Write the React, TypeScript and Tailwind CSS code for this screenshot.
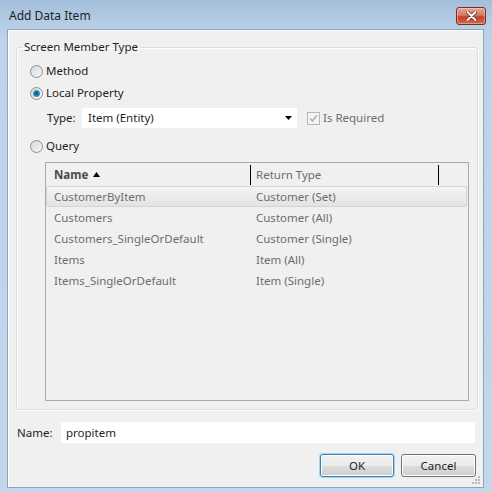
import { useState } from 'react';

const ROWS = [
  { name: 'CustomerByItem', type: 'Customer (Set)' },
  { name: 'Customers', type: 'Customer (All)' },
  { name: 'Customers_SingleOrDefault', type: 'Customer (Single)' },
  { name: 'Items', type: 'Item (All)' },
  { name: 'Items_SingleOrDefault', type: 'Item (Single)' },
];

type Member = 'method' | 'local' | 'query';

export default function App() {
  const [member, setMember] = useState<Member>('local');
  const [selected, setSelected] = useState(0);
  const [name, setName] = useState('propitem');

  return (
    <div className="flex h-[492px] w-[492px] flex-col overflow-hidden bg-[linear-gradient(180deg,#a3bedb_0px,#b3cbe4_20px,#bed3ea_40px,#c2d6ec_100%)] font-['Noto_Sans',sans-serif] text-[11.5px] text-[#1e1e1e]">
      <TitleBar />

      <div className="flex min-h-0 flex-1 pl-[7px] pr-[8px] pb-[4px]">
        {/* client area */}
        <div className="relative flex flex-1 flex-col border border-[#8fa3ba] bg-[#f0f0f0] shadow-[inset_1px_1px_0_#ffffff]">
          <fieldset className="mx-[8px] mt-[9px] mr-[5px] rounded-[3px] border border-[#d5dfe5] shadow-[inset_1px_1px_0_#ffffff,1px_1px_0_#ffffff]">
            <legend className="ml-[5px] px-[2px] leading-[16px]">Screen Member Type</legend>

            <div className="flex flex-col pt-[5px] pb-[8px] pl-[13px] pr-[8px]">
              <Radio label="Method" checked={member === 'method'} onClick={() => setMember('method')} />
              <Radio
                label="Local Property"
                checked={member === 'local'}
                onClick={() => setMember('local')}
              />

              <div className="mt-[4px] flex h-[20px] items-center">
                <span className="ml-[17px] w-[35px]">Type:</span>
                <div className="flex h-[20px] w-[215px] items-center justify-between bg-white pl-[6px] pr-[3px]">
                  <span>Item (Entity)</span>
                  <svg width="8" height="5" viewBox="0 0 8 5" className="mr-[1px]">
                    <path d="M0 0 H7 L3.5 4 Z" fill="#000" />
                  </svg>
                </div>
                <div className="ml-[10px] flex items-center gap-[3px] text-[#6d6d6d]">
                  <span className="flex h-[13px] w-[13px] items-center justify-center border border-[#b7b7b7] bg-[#f4f4f4]">
                    <svg width="9" height="9" viewBox="0 0 9 9">
                      <path d="M1 4.5 L3.5 7 L8 1" fill="none" stroke="#a8b4c0" strokeWidth="1.6" />
                    </svg>
                  </span>
                  <span>Is Required</span>
                </div>
              </div>

              <div className="mt-[7px]">
                <Radio label="Query" checked={member === 'query'} onClick={() => setMember('query')} />
              </div>

              {/* grid */}
              <div className="mt-[5px] ml-[15px] flex h-[239px] flex-col border border-[#a9a9a9] text-[#6d6d6d]">
                <div className="flex h-[23px] items-center">
                  <div className="flex w-[204px] items-center gap-[5px] pl-[8px] font-bold text-[#4a4a4a]">
                    Name
                    <svg width="7" height="5" viewBox="0 0 7 5">
                      <path d="M0 5 H7 L3.5 0 Z" fill="#000" />
                    </svg>
                  </div>
                  <div className="h-[20px] w-px bg-black" />
                  <div className="w-[187px] pl-[5px]">Return Type</div>
                  <div className="h-[20px] w-px bg-black" />
                </div>

                {ROWS.map((r, i) => (
                  <div
                    key={r.name}
                    onClick={() => setSelected(i)}
                    className={
                      i === selected
                        ? 'mr-[1px] flex h-[21px] items-center rounded-[2px] border border-[#d4d4d4] bg-[linear-gradient(180deg,#f4f4f4,#e3e3e3)]'
                        : 'mr-[1px] flex h-[21px] items-center border border-transparent'
                    }
                  >
                    <div className="w-[204px] pl-[7px]">{r.name}</div>
                    <div className="pl-[5px]">{r.type}</div>
                  </div>
                ))}
              </div>
            </div>
          </fieldset>

          <div className="mt-[12px] flex h-[21px] items-center pl-[9px] pr-[8px]">
            <span className="w-[44px]">Name:</span>
            <input
              value={name}
              onChange={(e) => setName(e.target.value)}
              className="h-[21px] flex-1 bg-white pl-[5px] text-[11.5px] text-[#1e1e1e] outline-none"
            />
          </div>

          <div className="mt-[11px] flex justify-end gap-[7px] pr-[7px]">
            <button className="h-[23px] w-[74px] rounded-[3px] border border-[#3c7fb1] bg-[linear-gradient(180deg,#f2f2f2_0%,#ebebeb_50%,#dddddd_51%,#cfcfcf_100%)] shadow-[inset_0_0_0_1px_#fff,0_0_0_1px_#9fd5f0]">
              OK
            </button>
            <button className="h-[23px] w-[75px] rounded-[3px] border border-[#707070] bg-[linear-gradient(180deg,#f2f2f2_0%,#ebebeb_50%,#dddddd_51%,#cfcfcf_100%)] shadow-[inset_0_0_0_1px_#fff]">
              Cancel
            </button>
          </div>

          <SizeGrip />
        </div>
      </div>
    </div>
  );
}

function TitleBar() {
  return (
    <div className="flex h-[29px] shrink-0 items-start justify-between">
      <span className="ml-[9px] mt-[7px] text-[12px] leading-[18px]">Add Data Item</span>
      <button
        aria-label="Close"
        className="mr-[6px] mt-[7px] flex h-[18px] w-[30px] items-center justify-center rounded-[3px] border border-[#7a2d22] bg-[linear-gradient(180deg,#e8a493_0%,#d47a64_45%,#c2422b_55%,#cf6a4c_100%)] shadow-[inset_0_0_0_1px_rgba(255,255,255,0.35)]"
      >
        <svg width="11" height="10" viewBox="0 0 11 10">
          <path d="M1.5 1 L9.5 9 M9.5 1 L1.5 9" stroke="#5a1a10" strokeWidth="3.2" strokeLinecap="round" />
          <path d="M1.5 1 L9.5 9 M9.5 1 L1.5 9" stroke="#fff" strokeWidth="2" strokeLinecap="round" />
        </svg>
      </button>
    </div>
  );
}

function Radio({ label, checked, onClick }: { label: string; checked: boolean; onClick: () => void }) {
  return (
    <div className="flex h-[22px] cursor-default items-center gap-[3px]" onClick={onClick}>
      <span className="flex h-[13px] w-[13px] items-center justify-center rounded-full border border-[#8e8f8f] bg-[linear-gradient(135deg,#d6d6d6,#f8f8f8)]">
        {checked && (
          <span className="h-[7px] w-[7px] rounded-full bg-[radial-gradient(circle_at_50%_50%,#0d4f75_0%,#1e7fb4_45%,#7cc7ea_100%)]" />
        )}
      </span>
      <span>{label}</span>
    </div>
  );
}

function SizeGrip() {
  const dots = [
    [6, 0],
    [3, 3],
    [6, 3],
    [0, 6],
    [3, 6],
    [6, 6],
  ];
  return (
    <svg width="9" height="9" viewBox="0 0 9 9" className="absolute right-[2px] bottom-[2px]">
      {dots.map(([x, y]) => (
        <rect key={`${x}-${y}`} x={x} y={y} width="2" height="2" fill="#b8bcc2" />
      ))}
    </svg>
  );
}
